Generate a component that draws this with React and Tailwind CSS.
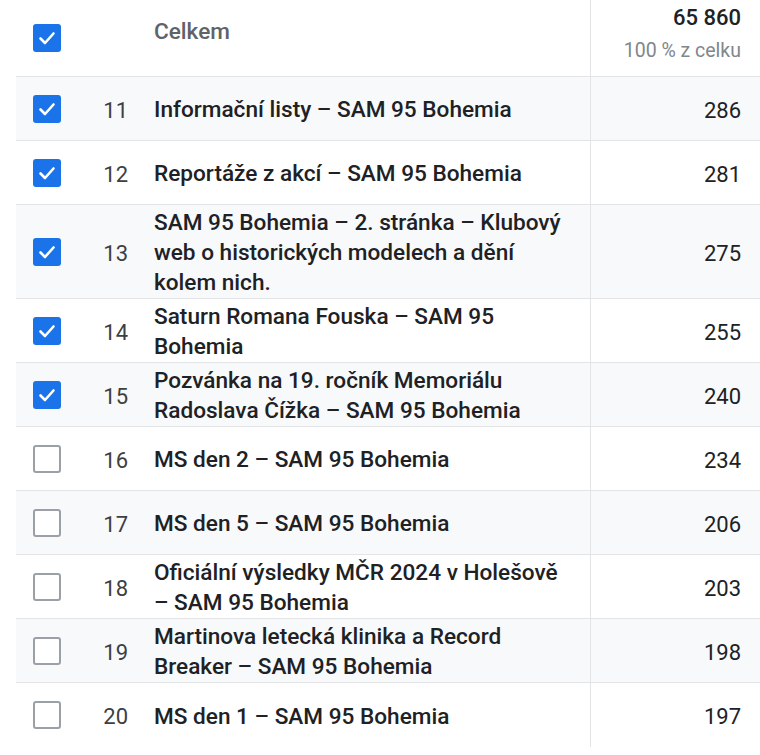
import React from "react";

const rows = [
  { n: 11, name: "Informační listy – SAM 95 Bohemia", v: 286, c: true },
  { n: 12, name: "Reportáže z akcí – SAM 95 Bohemia", v: 281, c: true },
  { n: 13, name: "SAM 95 Bohemia – 2. stránka – Klubový web o historických modelech a dění kolem nich.", v: 275, c: true },
  { n: 14, name: "Saturn Romana Fouska – SAM 95 Bohemia", v: 255, c: true },
  { n: 15, name: "Pozvánka na 19. ročník Memoriálu Radoslava Čížka – SAM 95 Bohemia", v: 240, c: true },
  { n: 16, name: "MS den 2 – SAM 95 Bohemia", v: 234, c: false },
  { n: 17, name: "MS den 5 – SAM 95 Bohemia", v: 206, c: false },
  { n: 18, name: "Oficiální výsledky MČR 2024 v Holešově – SAM 95 Bohemia", v: 203, c: false },
  { n: 19, name: "Martinova letecká klinika a Record Breaker – SAM 95 Bohemia", v: 198, c: false },
  { n: 20, name: "MS den 1 – SAM 95 Bohemia", v: 197, c: false },
];

function Check({ checked }) {
  if (checked) {
    return (
      <div className="w-[28px] h-[28px] rounded-[3px] bg-[#1a73e8] flex items-center justify-center">
        <svg width="20" height="20" viewBox="0 0 20 20">
          <path d="M3.5 10.5 L8 15 L16.5 5.5" fill="none" stroke="#fff" strokeWidth="2.6" strokeLinecap="round" strokeLinejoin="round" />
        </svg>
      </div>
    );
  }
  return <div className="w-[28px] h-[28px] rounded-[3px] border-[2.5px] border-[#9aa0a6] bg-white" />;
}

export default function App() {
  return (
    <div className="w-[760px] h-[755px] bg-white overflow-hidden" style={{ fontFamily: "Roboto, 'Noto Sans', sans-serif" }}>
      <div className="ml-[16px]">
        {/* header */}
        <div className="flex h-[77px] border-b border-[#e3e4e6]">
          <div className="w-[64px] shrink-0 flex items-center pl-[17px]">
            <Check checked />
          </div>
          <div className="w-[48px] shrink-0" />
          <div className="w-[26px] shrink-0" />
          <div className="w-[436px] shrink-0 pt-[17px] text-[22.6px] leading-[30px] font-medium text-[#5f6368]">Celkem</div>
          <div className="flex-1 border-l border-[#e3e4e6] pr-[19px] text-right">
            <div className="text-[22px] leading-[26px] font-medium text-[#202124] pt-[5px]">65 860</div>
            <div className="text-[19.5px] leading-[24px] text-[#80868b] pt-[8px]">100 % z celku</div>
          </div>
        </div>
        {rows.map((r, i) => (
          <div
            key={r.n}
            className={
              "flex min-h-[64px] " +
              (i % 2 === 0 ? "bg-[#f8f9fa] " : "bg-white ") +
              (i === rows.length - 1 ? "" : "border-b border-[#e3e4e6]")
            }
          >
            <div className="w-[64px] shrink-0 flex items-center pl-[17px]">
              <Check checked={r.c} />
            </div>
            <div className="w-[48px] shrink-0 pt-[3px] flex items-center justify-end text-[22px] text-[#3c4043]">{r.n}</div>
            <div className="w-[26px] shrink-0" />
            <div className="w-[436px] shrink-0 pr-[20px] pt-[3px] flex items-center text-[22.6px] leading-[30px] font-medium text-[#202124]">
              <span>{r.name}</span>
            </div>
            <div className="flex-1 border-l border-[#e3e4e6] pr-[19px] pt-[3px] flex items-center justify-end text-[22px] text-[#202124]">
              {r.v}
            </div>
          </div>
        ))}
      </div>
    </div>
  );
}
